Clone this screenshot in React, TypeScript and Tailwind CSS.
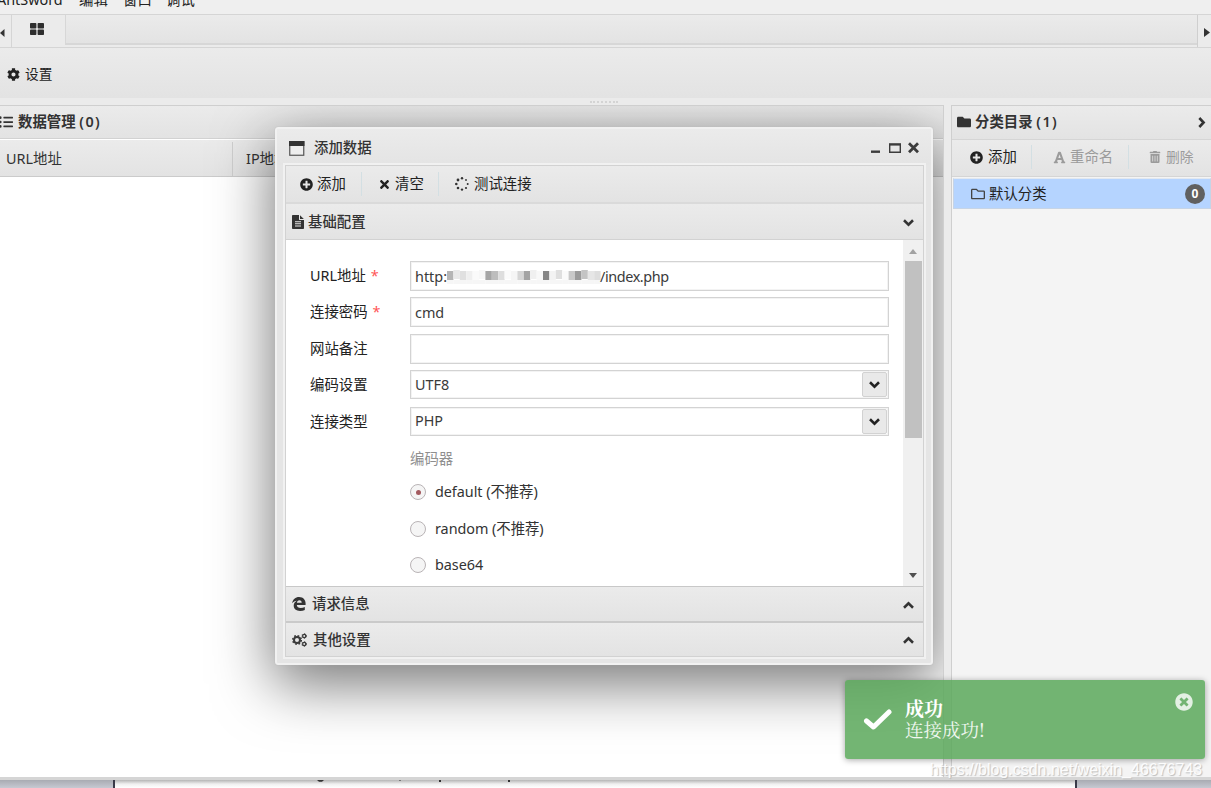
import type { ReactNode } from "react";
import {
  FaCog,
  FaFolder,
  FaFont,
  FaListUl,
  FaPlusCircle,
  FaRegFolder,
  FaTimes,
  FaTimesCircle,
  FaTrashAlt,
} from "react-icons/fa";

const bar = "bg-linear-to-b from-[#ebebeb] to-[#e3e3e3]";

function Chevron({ className }: { className?: string }) {
  return (
    <svg width="13" height="13" viewBox="0 0 13 13" className={className} fill="none" stroke="currentColor" strokeWidth="2.6">
      <path d="M2 4.300L6.500 8.600L11 4.300" />
    </svg>
  );
}

function FileIcon() {
  return (
    <svg width="12" height="14" viewBox="0 0 12 14" className="mr-[4px]" fill="#333">
      <path fillRule="evenodd" d="M.8 0H7v4.400c0 .4.300.7.700.7H12v8.100c0 .5-.3.800-.8.800H.8c-.5 0-.8-.3-.8-.8V.8C0 .3.300 0 .8 0zM3 6.200v1h6v-1zM3 8.300v1h6v-1zM3 10.500v1h6v-1z" />
      <path d="M8 .2L11.800 4H8z" />
    </svg>
  );
}

function EdgeIcon() {
  return (
    <svg width="14" height="14" viewBox="0 0 14 14" className="mr-[6px]" fill="#333">
      <path d="M.2 6.200C.7 2.400 3.400 0 7.100 0c4.200 0 6.500 2.900 6.500 6.600v1.500H4.800c.1 2 1.700 3 3.900 3 1.500 0 2.900-.4 4.100-1.100v3c-1.300.7-2.900 1-4.700 1-4 0-6.400-2.100-6.400-5.400 0-2.100 1.100-3.900 3-4.900C3 3.700 1.400 4.600.2 6.200zM4.900 5.700h4.800c0-1.600-.8-2.500-2.300-2.500-1.400 0-2.300.9-2.500 2.500z" />
    </svg>
  );
}

function GearsIcon() {
  return (
    <svg width="15" height="14" viewBox="0 0 15 14" className="mr-[6px]" fill="none" stroke="#3a3a3a">
      <circle cx="5" cy="7" r="3" strokeWidth="2" />
      <circle cx="5" cy="7" r="4.300" strokeWidth="1.500" strokeDasharray="1.690 1.690" />
      <circle cx="12.200" cy="3" r="1.600" strokeWidth="1.300" />
      <circle cx="12.200" cy="3" r="2.400" strokeWidth=".8" strokeDasharray="1.250 1.250" />
      <circle cx="12.200" cy="11" r="1.600" strokeWidth="1.300" />
      <circle cx="12.200" cy="11" r="2.400" strokeWidth=".8" strokeDasharray="1.250 1.250" />
    </svg>
  );
}

function SpinnerIcon() {
  return (
    <svg width="14" height="14" viewBox="0 0 14 14" className="mr-[5px]" fill="#333">
      <circle cx="7" cy="1.300" r="1.200" />
      <circle cx="11" cy="3" r=".9" />
      <circle cx="12.700" cy="7" r="1" />
      <circle cx="11" cy="11" r="1.100" />
      <circle cx="7" cy="12.600" r="1.200" />
      <circle cx="3" cy="11" r="1.300" />
      <circle cx="1.300" cy="7" r="1.300" />
      <circle cx="3" cy="3" r="1.400" />
    </svg>
  );
}

function Menu() {
  return (
    <div className="flex h-[14px] shrink-0 overflow-hidden bg-[#efefef] leading-[20px] text-[#222]">
      <span className="-mt-[10px] -ml-[3px] w-[82px]">AntSword</span>
      <span className="-mt-[10px] w-[44px]">编辑</span>
      <span className="-mt-[10px] w-[43px]">窗口</span>
      <span className="-mt-[10px]">调试</span>
    </div>
  );
}

function TabStrip() {
  return (
    <div className="flex h-[34px] shrink-0 border-t border-b border-[#d5d5d5] bg-[#ebebeb]">
      <div className="flex w-[12px] items-center border-r border-[#d5d5d5]">
        <svg width="5" height="8" viewBox="0 0 5 8" className="mt-1 fill-[#333]"><path d="M4.500 0v8L0 4z" /></svg>
      </div>
      <div className="flex w-[53px] pt-[8px] pl-[18px]">
        <svg width="14" height="13" viewBox="0 0 14 13" className="fill-[#2e2e2e]">
          <rect width="6.400" height="5.500" rx=".8" />
          <rect x="7.600" width="6.400" height="5.500" rx=".8" />
          <rect y="6.600" width="6.400" height="5.500" rx=".8" />
          <rect x="7.600" y="6.600" width="6.400" height="5.500" rx=".8" />
        </svg>
      </div>
      <div className={`h-[30px] flex-1 border-b-2 border-l border-[#d7d7d7] ${bar}`} />
      <div className="flex w-[14px] items-center border-l border-[#cfcfcf] pl-[6px]">
        <svg width="6" height="9" viewBox="0 0 6 9" className="mt-[2px] fill-[#333]"><path d="M0 0v9l6-4.500z" /></svg>
      </div>
    </div>
  );
}

function DataPanel() {
  return (
    <section className="relative flex w-[944px] shrink-0 flex-col overflow-hidden border-t border-r border-[#cfcfcf] bg-white">
      <div className={`flex h-[33px] shrink-0 items-center border-b border-[#d2d2d2] font-semibold ${bar}`}>
        <FaListUl className="mr-[5px] -ml-[1px] size-[14px] text-[#333]" />
        <span>数据管理 <span className="tracking-[1.400px]">(0)</span></span>
      </div>
      <div className={`mt-px flex h-[37px] shrink-0 items-center border-b border-[#cbcbcb] pt-[2px] ${bar}`}>
        <div className="flex h-full w-[233px] items-center border-r border-[#cfcfcf] pl-[6px]">URL地址</div>
        <div className="pl-[13px]">IP地址</div>
      </div>
      <Dialog />
    </section>
  );
}

function AccordionHead({ icon, title, open, className }: { icon: ReactNode; title: string; open?: boolean; className: string }) {
  return (
    <div className={`flex shrink-0 items-center px-[6px] font-medium text-[#333] ${bar} ${className}`}>
      {icon}
      <span className="flex-1">{title}</span>
      <Chevron className={`mr-[2px] ${open ? "mt-[2px]" : "mt-[2px] rotate-180"}`} />
    </div>
  );
}

function Field({ label, required, select, children }: { label: string; required?: boolean; select?: boolean; children?: ReactNode }) {
  return (
    <div className="mb-[6.400px] flex h-[30px] items-start">
      <label className="flex w-[100px] pt-[1px] leading-[28px] text-[#222]">
        {label}
        {required && <span className="ml-[5px] text-[#f55]">*</span>}
      </label>
      <div className={`flex w-[479px] items-center border border-[#d3d3d3] bg-white pl-[4px] text-[#3a3a3a] shadow-[inset_0_0_0_1px_#f3f3f3] ${select ? "h-[29px]" : "h-[30px] pt-[2px]"}`}>
        {children}
        {select && (
          <span className="mr-[1px] ml-auto flex h-[25px] w-[25px] items-center justify-center rounded-[2px] border border-[#d2d2d2] bg-[#e9e9e9]">
            <Chevron className="text-[#222]" />
          </span>
        )}
      </div>
    </div>
  );
}

const mosaic = [
  "#b5b5b5", "#e9e9e9", "#e0e0e0", "#efefef", "#fafafa", "#f7f7f7", "#a5a5a5", "#bdbdbd", "#dedede", "#fbfbfb", "#f5f5f5",
  "#d6d6d6", "#a3a3a3", "#f0f0f0", "#f8f8f8", "#868686", "#f3f3f3", "#dfdfdf", "#fafafa", "#c9c9c9", "#9b9b9b", "#c4c4c4", "#e6e6e6", "#dedede",
];

function Mosaic() {
  return (
    <svg width="154" height="14" viewBox="0 0 154 14">
      {mosaic.map((fill, i) => (
        <g key={i}>
          <rect x={i * 6.4} y={i % 4 === 1 ? 0 : 1} width="6.4" height="9" fill={fill} />
          <rect x={i * 6.4} y="10" width="6.4" height="4" fill="#f6f6f6" />
        </g>
      ))}
    </svg>
  );
}

function Radio({ label, checked }: { label: string; checked?: boolean }) {
  return (
    <div className="flex h-[36.500px] items-center text-[#333]">
      <span className="mr-[9px] flex size-[16px] items-center justify-center rounded-full border-[1.500px] border-[#b9b4b6] bg-[#f5f5f5]">
        {checked && <i className="size-[5px] rounded-full bg-[#a35a5f]" />}
      </span>
      <span className="tracking-[-0.050px]">{label}</span>
    </div>
  );
}

function Dialog() {
  return (
    <div className="absolute top-[21px] left-[275px] flex h-[538px] w-[658px] flex-col rounded-[3px] border-2 border-[#f1f1f1] bg-[#e5e5e5] px-[7px] pb-[6px] pl-[8px] shadow-[0_0_1px_#aaa,0_17px_58px_2px_rgba(0,0,0,0.54)]">
      <div className="-mr-[7px] -ml-[8px] flex h-[36px] shrink-0 items-center bg-linear-to-b from-[#ebebeb] to-[#e4e4e4] pt-[2px] pr-[11px] pl-[12px] font-medium text-[#333]">
        <svg width="16" height="15" viewBox="0 0 16 15" className="mr-[9px]"><rect x=".75" y=".75" width="14" height="13.500" fill="#eee" stroke="#555" strokeWidth="1.2" /><path d="M0 0h15.500v5H0z" fill="#333" /></svg>
        <span className="flex-1">添加数据</span>
        <svg width="50" height="14" viewBox="0 0 50 14" fill="none" stroke="#3c3c3c">
          <path d="M1 10.700h9" strokeWidth="2.400" />
          <path d="M19.700 3.200h10.600v8H19.700z" strokeWidth="1.400" />
          <path d="M19 3.500h12" strokeWidth="2.200" />
          <path d="M39 2.300l9 9M48 2.300l-9 9" strokeWidth="2.800" />
        </svg>
      </div>
      <div className="flex min-h-0 flex-1 flex-col border border-[#d2d2d2] shadow-[0_0_0_2px_#f1f1f1]">
        <div className={`flex h-[38px] shrink-0 items-center border-b-2 border-[#dadada] pl-[14px] text-[#222] ${bar}`}>
          <FaPlusCircle className="mr-[4px] size-[13px]" />
          <span className="w-[44px]">添加</span>
          <i className="mr-[16px] h-[24px] w-px bg-[#d3dfe3]" />
          <FaTimes className="mr-[4px] size-[13px]" />
          <span className="w-[43px]">清空</span>
          <i className="mr-[16px] h-[24px] w-px bg-[#d3dfe3]" />
          <SpinnerIcon />
          <span>测试连接</span>
        </div>
        <AccordionHead open className="h-[36px] border-b border-[#d2d2d2]" icon={<FileIcon />} title="基础配置" />
        <div className="flex min-h-0 flex-1 overflow-hidden bg-white">
          <div className="flex-1 pt-[21px] pl-[24px]">
            <Field label="URL地址" required>
              <span>http:</span>
              <Mosaic />
              <span className="-ml-[1px] tracking-[-0.400px]">/index.php</span>
            </Field>
            <Field label="连接密码" required>cmd</Field>
            <Field label="网站备注" />
            <Field label="编码设置" select>UTF8</Field>
            <Field label="连接类型" select>PHP</Field>
            <div className="pl-[100px]">
              <div className="h-[31px] leading-[31px] text-[#8f8f8f]">编码器</div>
              <Radio label="default (不推荐)" checked />
              <Radio label="random (不推荐)" />
              <Radio label="base64" />
            </div>
          </div>
          <div className="flex w-[20px] flex-col items-center bg-[#f0f0f0]">
            <svg width="8" height="5" viewBox="0 0 8 5" className="mt-[9px] mb-[7px] shrink-0 fill-[#a2a2a2]"><path d="M0 5L4 0l4 5z" /></svg>
            <div className="h-[177px] w-[17px] shrink-0 bg-[#c1c1c1]" />
            <svg width="8" height="5" viewBox="0 0 8 5" className="mt-auto mb-[8px] fill-[#505050]"><path d="M0 0h8L4 5z" /></svg>
          </div>
        </div>
        <AccordionHead className="h-[35px] border-t border-[#c8c8c8]" icon={<EdgeIcon />} title="请求信息" />
        <AccordionHead className="h-[35px] border-t-2 border-[#cacaca]" icon={<GearsIcon />} title="其他设置" />
      </div>
    </div>
  );
}

function CategoryPanel() {
  return (
    <section className="ml-[7px] flex flex-1 flex-col border-t border-l border-[#cfcfcf] bg-[#f4f4f4]">
      <div className={`flex h-[34px] shrink-0 items-center border-b border-[#d5d5d5] pb-[2px] pl-[5px] font-semibold ${bar}`}>
        <FaFolder className="mr-[4px] size-[14px]" />
        <span className="flex-1">分类目录 <span className="tracking-[1.400px]">(1)</span></span>
        <Chevron className="mt-[2px] mr-[3px] -rotate-90" />
      </div>
      <div className={`flex h-[37px] shrink-0 items-center border-b border-[#d5d5d5] pb-[2px] pl-[18px] text-[#9b9b9b] ${bar}`}>
        <FaPlusCircle className="mr-[5px] size-[13px] text-[#222]" />
        <span className="w-[43px] text-[#222]">添加</span>
        <i className="mr-[21px] h-[24px] w-px bg-[#d3dfe3]" />
        <FaFont className="mr-[4px] size-[13px]" />
        <span className="w-[58px]">重命名</span>
        <i className="mr-[20px] h-[24px] w-px bg-[#d3dfe3]" />
        <FaTrashAlt className="mr-[5px] size-[12px]" />
        <span className="text-[13.800px] whitespace-nowrap">删除</span>
      </div>
      <div className="mt-[1px] ml-[1px] flex h-[31px] items-center border border-[#c6d4e6] border-t-[#e2e8f0] bg-[#b5d4ff] pl-[17px] text-[#222]">
        <FaRegFolder className="mr-[4px] size-[14px] text-[#444]" />
        <span className="flex-1">默认分类</span>
        <span className="mr-[5px] flex size-[20px] items-center justify-center rounded-full bg-[#606060] text-[12px] font-bold text-white">0</span>
      </div>
    </section>
  );
}

function Toast() {
  return (
    <div className="absolute top-[680px] left-[845px] flex h-[79px] w-[360px] items-center rounded-[3px] bg-[#5ba85b]/85 text-[18.500px] text-white/90 shadow-[0_1px_6px_rgba(0,0,0,0.35)]">
      <svg width="30" height="24" viewBox="0 0 30 24" className="mr-[12px] ml-[18px]" fill="none" stroke="#fff" strokeWidth="5" strokeLinecap="round" strokeLinejoin="round">
        <path d="M3.500 13L10.500 19L26 4" />
      </svg>
      <div className="-mt-[3px] w-[200px] font-['Noto_Serif_CJK_SC','Liberation_Serif','Noto_Sans_CJK_SC',serif]">
        <div className="h-[23px] text-[19px] leading-[23px] font-bold text-white">成功</div>
        <div className="h-[21px] leading-[21px]">连接成功!</div>
      </div>
      <FaTimesCircle className="mt-[13px] mr-[12px] ml-auto size-[18px] self-start text-white/80" />
    </div>
  );
}

function PageBehind() {
  return (
    <div className="flex h-[11px] shrink-0 border-t-[3px] border-[#d5d5d5] bg-white">
      <div className="w-[115px] border-r-2 border-[#3a3a48] bg-linear-to-b from-[#a9abb2] to-[#c6c9d2]" />
      <div className="h-full w-[960px] bg-linear-to-b from-[#b5b5b5] via-[#f0f0f0] to-white">
        <svg width="700" height="3" viewBox="0 0 700 3" className="fill-[#333]">
          <path d="M202 0h7l-2 1.800h-3zM284 0h2l-1 1zM324 0h2v2h-2zM393 0h2v2h-2z" />
        </svg>
      </div>
      <div className="flex-1 border-l-2 border-[#3a3a48] bg-linear-to-b from-[#a9abb2] to-[#c6c9d2]" />
    </div>
  );
}

export default function App() {
  return (
    <main className="relative flex h-[788px] w-[1211px] flex-col overflow-hidden bg-[#ebebeb] font-['Noto_Sans','Noto_Sans_CJK_SC',sans-serif] text-[14.400px] leading-[20px] text-[#333]">
      <Menu />
      <TabStrip />
      <div className={`flex h-[50px] shrink-0 items-center pt-[2px] pl-[7px] text-[#222] ${bar}`}>
        <FaCog className="mr-[5px] size-[13px]" />
        <span className="text-[13.700px]">设置</span>
      </div>
      <div className="flex h-[7px] shrink-0 items-center justify-center">
        <i className="-ml-[3px] h-[2px] w-[28px] border-t-2 border-dotted border-[#d4d4d4]" />
      </div>
      <div className="flex min-h-0 flex-1">
        <DataPanel />
        <CategoryPanel />
      </div>
      <PageBehind />
      <Toast />
      <div className="absolute top-[760px] left-[930px] font-['Liberation_Sans',sans-serif] text-[16px] leading-[20px] whitespace-nowrap text-white/90 [text-shadow:1px_1px_1px_#bbb]">
        https://blog.csdn.net/weixin_46676743
      </div>
    </main>
  );
}
